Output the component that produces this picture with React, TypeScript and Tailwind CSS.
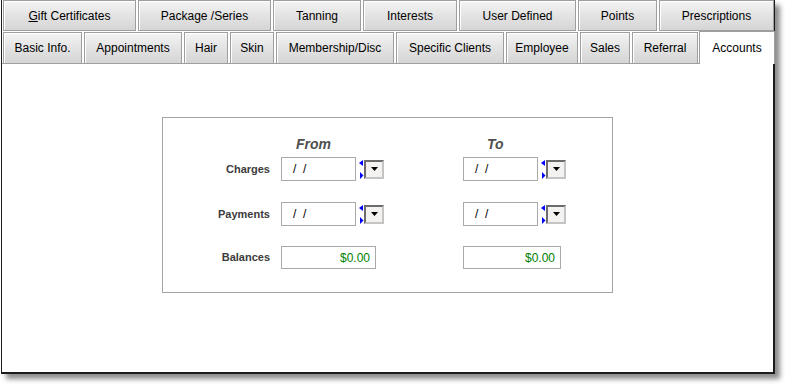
import type { ReactNode } from "react";

const topTabs: { label: ReactNode; w: string }[] = [
  { label: <><span className="underline">G</span>ift Certificates</>, w: "w-[133px]" },
  { label: "Package /Series", w: "w-[133px]" },
  { label: "Tanning", w: "w-[88px]" },
  { label: "Interests", w: "w-[94px]" },
  { label: "User Defined", w: "w-[117px]" },
  { label: "Points", w: "w-[79px]" },
  { label: "Prescriptions", w: "w-[115px]" },
];

const bottomTabs = [
  { label: "Basic Info.", w: "w-[79px]" },
  { label: "Appointments", w: "w-[98px]" },
  { label: "Hair", w: "w-[44px]" },
  { label: "Skin", w: "w-[44px]" },
  { label: "Membership/Disc", w: "w-[118px]" },
  { label: "Specific Clients", w: "w-[108px]" },
  { label: "Employee", w: "w-[72px]" },
  { label: "Sales", w: "w-[50px]" },
  { label: "Referral", w: "w-[66px]" },
];

const tabSkin =
  "flex shrink-0 items-center justify-center border-[#9e9e9e] bg-linear-to-b from-[#f4f4f4] via-[#e3e3e3] to-[#d5d5d5] text-[12px] text-black shadow-[inset_1px_1px_0_#ffffff]";

function DateBox() {
  return (
    <div className="flex items-center">
      <div className="flex h-[24px] w-[75px] items-center whitespace-pre border border-[#a9a9a9] bg-white pl-[11px] text-[12px] text-black">
        {"/  /"}
      </div>
      <svg width="5" height="19" viewBox="0 0 5 19" className="ml-[3px]">
        <polygon points="0,3 4,0 4,6" fill="#0000ff" />
        <polygon points="1,12 4.5,15.5 1,19" fill="#0000ff" />
      </svg>
      <div className="flex h-[19px] w-[20px] items-center justify-center border-2 border-t-[#6c6c6c] border-l-[#6c6c6c] border-r-[#c4c4c4] border-b-[#c4c4c4] bg-[#f4f1f1]">
        <svg width="7" height="4" viewBox="0 0 7 4">
          <polygon points="0,0 7,0 3.5,4" fill="#000000" />
        </svg>
      </div>
    </div>
  );
}

function MoneyBox({ w }: { w: string }) {
  return (
    <div className={`flex h-[23px] ${w} items-center justify-end border border-[#a9a9a9] bg-white pr-[5px] text-[12px] text-[#008000]`}>
      $0.00
    </div>
  );
}

function Row({ label, from, to, mt }: { label: string; from: ReactNode; to: ReactNode; mt: string }) {
  return (
    <div className={`flex items-center ${mt}`}>
      <div className="w-[107px] text-right text-[11px] font-bold text-[#3c3c3c]">{label}</div>
      <div className="ml-[11px] w-[182px]">{from}</div>
      <div>{to}</div>
    </div>
  );
}

export default function App() {
  return (
    <div className="h-[386px] w-[786px] bg-white font-['Liberation_Sans',Arial,sans-serif]">
      <div className="ml-px flex h-[374px] w-[774px] flex-col border-b-2 border-l border-r-2 border-[#1c1c1c] bg-white shadow-[5px_5px_5px_rgba(0,0,0,0.45)]">
        <div className="flex gap-[2px] pl-px">
          {topTabs.map((t, i) => (
            <div key={i} className={`${tabSkin} h-[31px] border ${t.w}`}>
              {t.label}
            </div>
          ))}
        </div>
        <div className="flex h-[32px] items-end gap-[2px] pl-px">
          {bottomTabs.map((t) => (
            <div key={t.label} className={`${tabSkin} h-[31px] border border-b-0 ${t.w}`}>
              {t.label}
            </div>
          ))}
          <div className="relative z-10 -mb-px ml-[-1px] flex h-[33px] w-[76px] shrink-0 justify-center border border-b-0 border-[#9e9e9e] bg-white pt-[7px] text-[12px] text-black">
            Accounts
          </div>
        </div>
        <div className="flex-1 border-t border-[#9e9e9e] bg-white">
          <div className="ml-[160px] mt-[53px] h-[176px] w-[451px] border border-[#a3a3a3] pt-[18px]">
            <div className="flex h-[16px] items-center text-[14px] font-bold italic leading-[16px] text-[#505050]">
              <div className="w-[107px]" />
              <div className="ml-[11px] w-[182px] pl-[15px]">From</div>
              <div className="pl-[24px]">To</div>
            </div>
            <Row label="Charges" mt="mt-[5px]" from={<DateBox />} to={<DateBox />} />
            <Row label="Payments" mt="mt-[21px]" from={<DateBox />} to={<DateBox />} />
            <Row label="Balances" mt="mt-[20px]" from={<MoneyBox w="w-[95px]" />} to={<MoneyBox w="w-[98px]" />} />
          </div>
        </div>
      </div>
    </div>
  );
}
